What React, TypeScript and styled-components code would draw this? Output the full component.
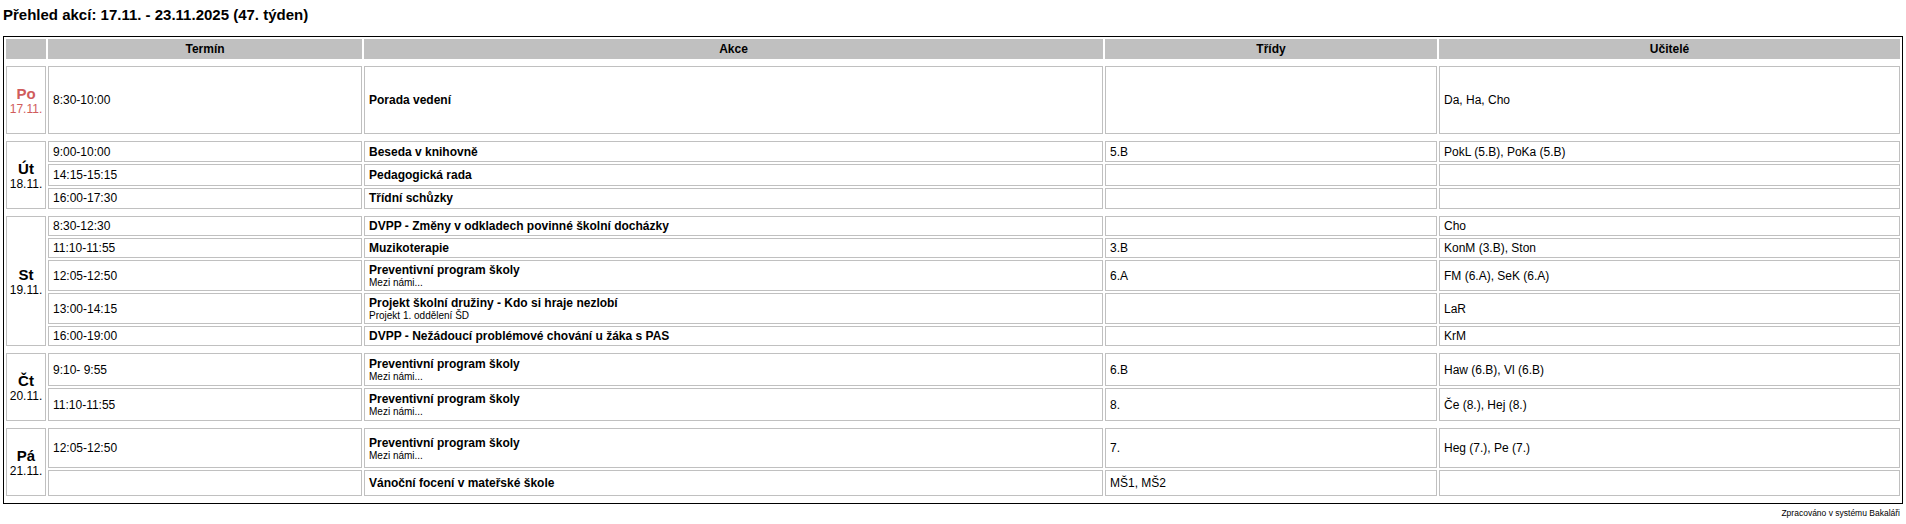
import * as React from "react";
import styled, { createGlobalStyle } from "styled-components";

type Event = {
  time: string;
  title: string;
  note?: string;
  classes?: string;
  teachers?: string;
};

type Day = {
  name: string;
  date: string;
  holiday?: boolean;
  events: Event[];
};

const days: Day[] = [
  {
    name: "Po",
    date: "17.11.",
    holiday: true,
    events: [{ time: "8:30-10:00", title: "Porada vedení", teachers: "Da, Ha, Cho" }],
  },
  {
    name: "Út",
    date: "18.11.",
    events: [
      { time: "9:00-10:00", title: "Beseda v knihovně", classes: "5.B", teachers: "PokL (5.B), PoKa (5.B)" },
      { time: "14:15-15:15", title: "Pedagogická rada" },
      { time: "16:00-17:30", title: "Třídní schůzky" },
    ],
  },
  {
    name: "St",
    date: "19.11.",
    events: [
      { time: "8:30-12:30", title: "DVPP - Změny v odkladech povinné školní docházky", teachers: "Cho" },
      { time: "11:10-11:55", title: "Muzikoterapie", classes: "3.B", teachers: "KonM (3.B), Ston" },
      {
        time: "12:05-12:50",
        title: "Preventivní program školy",
        note: "Mezi námi...",
        classes: "6.A",
        teachers: "FM (6.A), SeK (6.A)",
      },
      {
        time: "13:00-14:15",
        title: "Projekt školní družiny - Kdo si hraje nezlobí",
        note: "Projekt 1. oddělení ŠD",
        teachers: "LaR",
      },
      { time: "16:00-19:00", title: "DVPP - Nežádoucí problémové chování u žáka s PAS", teachers: "KrM" },
    ],
  },
  {
    name: "Čt",
    date: "20.11.",
    events: [
      {
        time: "9:10- 9:55",
        title: "Preventivní program školy",
        note: "Mezi námi...",
        classes: "6.B",
        teachers: "Haw (6.B), Vl (6.B)",
      },
      {
        time: "11:10-11:55",
        title: "Preventivní program školy",
        note: "Mezi námi...",
        classes: "8.",
        teachers: "Če (8.), Hej (8.)",
      },
    ],
  },
  {
    name: "Pá",
    date: "21.11.",
    events: [
      {
        time: "12:05-12:50",
        title: "Preventivní program školy",
        note: "Mezi námi...",
        classes: "7.",
        teachers: "Heg (7.), Pe (7.)",
      },
      { time: "", title: "Vánoční focení v mateřské škole", classes: "MŠ1, MŠ2" },
    ],
  },
];

export default function App() {
  return (
    <>
      <GlobalStyle />
      <Page>
        <Title>Přehled akcí: 17.11. - 23.11.2025 (47. týden)</Title>
        <Table>
          <colgroup>
            <col style={{ width: 40 }} />
            <col style={{ width: 314 }} />
            <col style={{ width: 739 }} />
            <col style={{ width: 332 }} />
            <col />
          </colgroup>
          <tbody>
            <tr>
              <HeadCell />
              <HeadCell>Termín</HeadCell>
              <HeadCell>Akce</HeadCell>
              <HeadCell>Třídy</HeadCell>
              <HeadCell>Učitelé</HeadCell>
            </tr>
            {days.map((day) => (
              <React.Fragment key={day.name}>
                <tr>
                  <Spacer colSpan={5} />
                </tr>
                {day.events.map((ev, i) => (
                  <tr key={i}>
                    {i === 0 && (
                      <DayCell rowSpan={day.events.length} $holiday={day.holiday}>
                        <DayName>{day.name}</DayName>
                        <DayDate>{day.date}</DayDate>
                      </DayCell>
                    )}
                    <Cell>{ev.time}</Cell>
                    <Cell>
                      <EventTitle>{ev.title}</EventTitle>
                      {ev.note && <EventNote>{ev.note}</EventNote>}
                    </Cell>
                    <Cell>{ev.classes}</Cell>
                    <Cell>{ev.teachers}</Cell>
                  </tr>
                ))}
              </React.Fragment>
            ))}
            <tr>
              <Spacer colSpan={5} />
            </tr>
          </tbody>
        </Table>
        <Footer>Zpracováno v systému Bakaláři</Footer>
      </Page>
    </>
  );
}

/**
 * Styled Components
 */

const GlobalStyle = createGlobalStyle`
  body {
    margin: 0;
    background: #fff;
    color: #000;
    font-family: "Liberation Sans", Arial, sans-serif;
  }
`;

const Page = styled.div`
  padding: 3px;
`;

const Title = styled.div`
  font-size: 15px;
  font-weight: 700;
  line-height: 18px;
  margin: 3px 0 12px;
`;

const Table = styled.table`
  width: 100%;
  table-layout: fixed;
  border: 1px solid #000;
  border-collapse: separate;
  border-spacing: 2px;
  font-size: 12px;
  line-height: 14px;
`;

const HeadCell = styled.th`
  background: #c0c0c0;
  border: 1px solid #c0c0c0;
  padding: 2px 4px;
  font-weight: 700;
  text-align: center;
`;

const Spacer = styled.td`
  height: 3px;
  padding: 0;
  border: 0;
`;

const Cell = styled.td`
  border: 1px solid #c0c0c0;
  padding: 2px 4px;
  vertical-align: middle;
  text-align: left;
`;

const DayCell = styled.td<{ $holiday?: boolean }>`
  box-sizing: border-box;
  height: 68px;
  border: 1px solid #c0c0c0;
  padding: 2px 0;
  text-align: center;
  vertical-align: middle;
  color: ${({ $holiday }) => ($holiday ? "#d05c5c" : "#000")};
`;

const DayName = styled.div`
  font-size: 15px;
  font-weight: 700;
  line-height: 17px;
`;

const DayDate = styled.div`
  font-size: 12px;
  line-height: 14px;
`;

const EventTitle = styled.div`
  font-weight: 700;
`;

const EventNote = styled.div`
  font-size: 10px;
  line-height: 11px;
`;

const Footer = styled.div`
  font-size: 8.5px;
  line-height: 11px;
  text-align: right;
  padding: 4px 3px 0 0;
`;
